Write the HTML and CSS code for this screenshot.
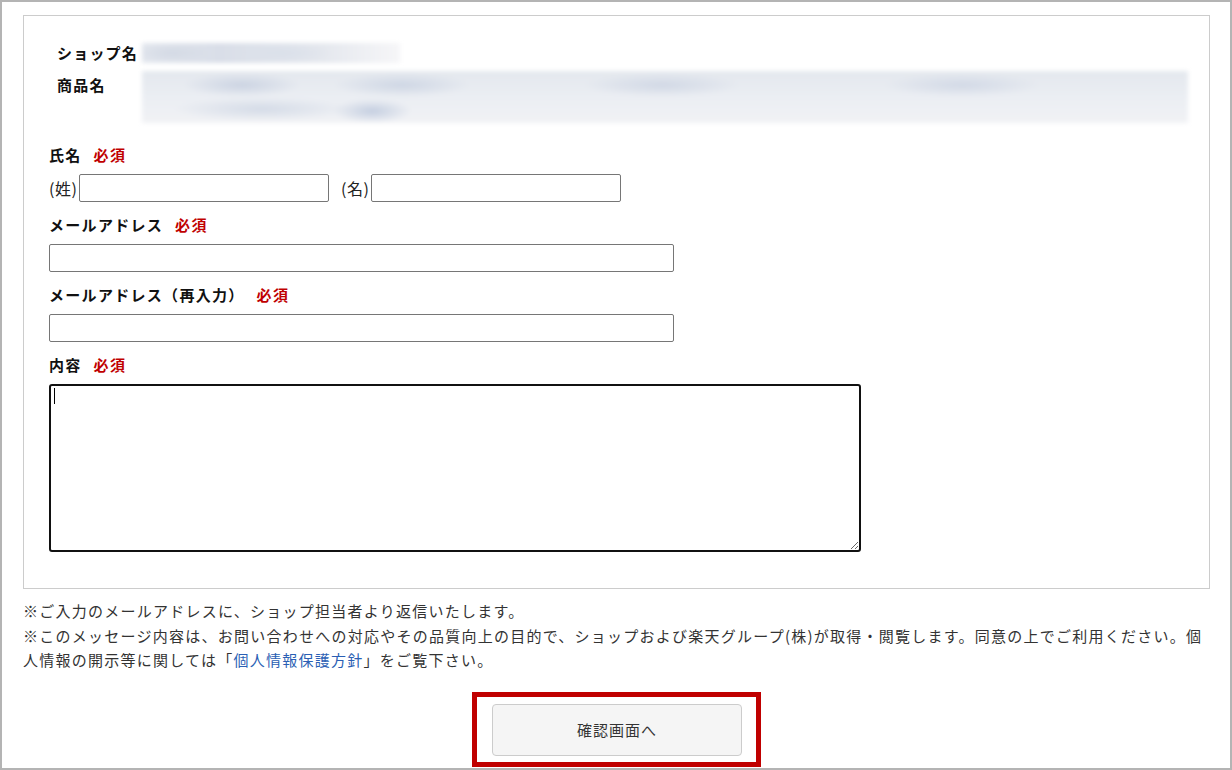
FILE: index.html
```html
<!DOCTYPE html>
<html lang="ja">

<head>
  <meta charset="UTF-8">
  <meta name="viewport" content="width=device-width, initial-scale=1.0">
  <title>お問い合わせ</title>
  <link rel="stylesheet" href="styles.css">
</head>

<body>
  <div class="frame">
    <div class="form-box">
      <div class="shop-info">
        <div class="shop-row">
          <div class="shop-label">ショップ名</div>
          <div class="blur blur-shop"></div>
        </div>
        <div class="shop-row">
          <div class="shop-label item">商品名</div>
          <div class="blur blur-item"></div>
        </div>
      </div>

      <div class="field">
        <div class="label">氏名<span class="req">必須</span></div>
        <div class="name-row">
          <span class="paren">(姓)</span><input type="text" class="input-name">
          <span class="paren second">(名)</span><input type="text" class="input-name">
        </div>
      </div>

      <div class="field">
        <div class="label">メールアドレス<span class="req">必須</span></div>
        <input type="text" class="input-mail">
      </div>

      <div class="field">
        <div class="label">メールアドレス（再入力）<span class="req">必須</span></div>
        <input type="text" class="input-mail">
      </div>

      <div class="field last">
        <div class="label">内容<span class="req">必須</span></div>
        <div class="message-wrap">
          <textarea class="message"></textarea>
          <span class="caret"></span>
        </div>
      </div>
    </div>

    <div class="notes">
      <p>※ご入力のメールアドレスに、ショップ担当者より返信いたします。</p>
      <p>※このメッセージ内容は、お問い合わせへの対応やその品質向上の目的で、ショップおよび楽天グループ(株)が取得・閲覧します。同意の上でご利用ください。個人情報の開示等に関しては「<a href="#">個人情報保護方針</a>」をご覧下さい。</p>
    </div>

    <div class="submit-wrap">
      <div class="highlight">
        <button type="button" class="submit">確認画面へ</button>
      </div>
    </div>
  </div>
</body>

</html>
```

FILE: styles.css
```css
* {
  padding: 0;
  margin: 0;
  box-sizing: border-box;
}

body {
  font-family: "Noto Sans CJK JP", "Noto Sans", sans-serif;
  color: #333;
  background-color: #fff;
}

.frame {
  height: 770px;
  overflow: hidden;
  border: 2px solid #b4b4b4;
  padding: 13px 20px 0 21px;
}

.form-box {
  border: 1px solid #ccc;
  padding: 27px 21px 36px 25px;
}

.shop-info {
  padding-left: 8px;
  margin-bottom: 22px;
}

.shop-row {
  display: flex;
  margin-bottom: 8px;
}

.shop-label {
  width: 85px;
  flex-shrink: 0;
  font-size: 15px;
  letter-spacing: 1.2px;
  font-weight: bold;
  color: #111;
  line-height: 20px;
}

.shop-label.item {
  padding-top: 4px;
}

.blur {
  filter: blur(2px);
}

.blur-shop {
  width: 258px;
  height: 20px;
  background:
    radial-gradient(ellipse 40px 10px at 30px 10px, #d3d9e4, transparent),
    radial-gradient(ellipse 50px 10px at 140px 10px, #dae0ea, transparent),
    linear-gradient(90deg, #e3e7ee, #d9dee8 30%, #e5e8ee 70%, #f6f6f8);
}

.blur-item {
  flex: 1;
  height: 52px;
  background:
    radial-gradient(ellipse 60px 12px at 100px 14px, #cbd3e2, transparent),
    radial-gradient(ellipse 70px 12px at 260px 14px, #ced6e4, transparent),
    radial-gradient(ellipse 80px 12px at 520px 14px, #d1d8e5, transparent),
    radial-gradient(ellipse 80px 12px at 820px 14px, #d2d9e6, transparent),
    radial-gradient(ellipse 90px 12px at 120px 38px, #d4dbe7, transparent),
    radial-gradient(ellipse 40px 12px at 230px 40px, #c4cee0, transparent),
    linear-gradient(180deg, #e4e8ee, #ebeef3 50%, #f1f2f5);
}

.field {
  margin-bottom: 13px;
}

.field.last {
  margin-bottom: 0;
}

.label {
  font-size: 15px;
  letter-spacing: 1.3px;
  font-weight: bold;
  color: #111;
  line-height: 20px;
  margin-bottom: 9px;
}

.req {
  color: #c00000;
  margin-left: 12px;
}

.name-row {
  display: flex;
  align-items: center;
}

.paren {
  font-size: 16px;
  letter-spacing: 0.5px;
  color: #222;
  width: 30px;
}

.paren.second {
  margin-left: 12px;
}

input[type=text] {
  height: 28px;
  border: 1px solid #767676;
  border-radius: 2px;
  padding: 2px 4px;
  font-size: 15px;
}

.input-name {
  width: 250px;
}

.input-mail {
  display: block;
  width: 625px;
}

.message-wrap {
  position: relative;
  width: 812px;
}

.message {
  display: block;
  width: 812px;
  height: 168px;
  border: 2px solid #111;
  border-radius: 3px;
  outline: none;
  padding: 2px 3px;
  font-size: 15px;
  font-family: "Noto Sans CJK JP", sans-serif;
}

.caret {
  position: absolute;
  left: 5px;
  top: 4px;
  width: 1px;
  height: 16px;
  background: #000;
}

.notes {
  margin-top: 10px;
  font-size: 15px;
  letter-spacing: 1.25px;
  line-height: 24.5px;
  color: #333;
}

.notes a {
  color: #2b5fb4;
  text-decoration: none;
}

.submit-wrap {
  display: flex;
  justify-content: center;
  margin-top: 19px;
}

.highlight {
  border: 5px solid #c00000;
  padding: 7px 14px 6px 15px;
}

.submit {
  display: block;
  width: 250px;
  height: 52px;
  background: #f5f5f5;
  border: 1px solid #ccc;
  border-radius: 4px;
  font-size: 15px;
  letter-spacing: 1px;
  color: #333;
  font-family: "Noto Sans CJK JP", sans-serif;
}
```
